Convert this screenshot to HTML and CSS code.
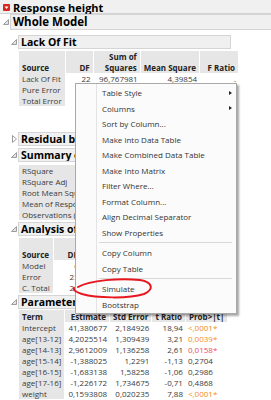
FILE: index.html
```html
<!DOCTYPE html>
<html lang="en">
  <head>
    <meta charset="UTF-8" />
    <title>Response height</title>
    <link rel="stylesheet" href="styles.css">
  </head>
  <body>
    <div class="report">
      <div class="title-bar">
        <span class="hotspot"><svg width="7" height="7" viewBox="0 0 7 7"><path d="M1.5 2.5 L5.5 2.5 L3.5 5 Z" fill="#fff"/></svg></span>
        <span>Response height</span>
      </div>

      <div class="node">
        <div class="node-head top">
          <svg class="toggle" width="8" height="8" viewBox="0 0 8 8"><path d="M6.5 1.5 L6.5 6.5 L1.5 6.5 Z" fill="#e2e2e2" stroke="#9c9c9c"/></svg>
          <div class="node-title wide">Whole Model</div>
        </div>
        <div class="node-body">
          <div class="strip"></div>

          <div class="node">
            <div class="node-head">
              <svg class="toggle" width="8" height="8" viewBox="0 0 8 8"><path d="M6.5 1.5 L6.5 6.5 L1.5 6.5 Z" fill="#e2e2e2" stroke="#9c9c9c"/></svg>
              <div class="node-title">Lack Of Fit</div>
            </div>
            <table class="grid lof">
              <thead>
                <tr><th class="txt">Source</th><th>DF</th><th>Sum of<br>Squares</th><th>Mean Square</th><th>F Ratio</th></tr>
              </thead>
              <tbody>
                <tr><td class="lbl">Lack Of Fit</td><td>22</td><td>96,767981</td><td>4,39854</td><td>.</td></tr>
                <tr><td class="lbl">Pure Error</td><td></td><td></td><td></td><td></td></tr>
                <tr><td class="lbl">Total Error</td><td></td><td></td><td></td><td></td></tr>
              </tbody>
            </table>
          </div>

          <div class="node gap-big">
            <div class="node-head">
              <svg class="toggle" width="8" height="10" viewBox="0 0 8 10"><path d="M2.5 1.5 L6.5 5 L2.5 8.5 Z" fill="#fff" stroke="#9c9c9c"/></svg>
              <div class="node-title">Residual by Predicted Plot</div>
            </div>
          </div>

          <div class="node">
            <div class="node-head">
              <svg class="toggle" width="8" height="8" viewBox="0 0 8 8"><path d="M6.5 1.5 L6.5 6.5 L1.5 6.5 Z" fill="#e2e2e2" stroke="#9c9c9c"/></svg>
              <div class="node-title">Summary of Fit</div>
            </div>
            <table class="grid fit">
              <tbody>
                <tr><td class="lbl">RSquare</td><td></td></tr>
                <tr><td class="lbl">RSquare Adj</td><td></td></tr>
                <tr><td class="lbl">Root Mean Square Error</td><td></td></tr>
                <tr><td class="lbl">Mean of Response</td><td></td></tr>
                <tr><td class="lbl">Observations (or Sum Wgts)</td><td></td></tr>
              </tbody>
            </table>
          </div>

          <div class="node">
            <div class="node-head">
              <svg class="toggle" width="8" height="8" viewBox="0 0 8 8"><path d="M6.5 1.5 L6.5 6.5 L1.5 6.5 Z" fill="#e2e2e2" stroke="#9c9c9c"/></svg>
              <div class="node-title">Analysis of Variance</div>
            </div>
            <table class="grid anova">
              <thead>
                <tr><th class="txt">Source</th><th>DF</th><th>Sum of<br>Squares</th><th>Mean Square</th><th>F Ratio</th></tr>
              </thead>
              <tbody>
                <tr><td class="lbl">Model</td><td>6</td><td></td><td></td><td></td></tr>
                <tr><td class="lbl">Error</td><td>23</td><td></td><td></td><td></td></tr>
                <tr><td class="lbl">C. Total</td><td>29</td><td></td><td></td><td></td></tr>
              </tbody>
            </table>
          </div>

          <div class="node">
            <div class="node-head">
              <svg class="toggle" width="8" height="8" viewBox="0 0 8 8"><path d="M6.5 1.5 L6.5 6.5 L1.5 6.5 Z" fill="#e2e2e2" stroke="#9c9c9c"/></svg>
              <div class="node-title">Parameter Estimates</div>
            </div>
            <table class="grid params">
              <thead>
                <tr><th class="txt">Term</th><th>Estimate</th><th>Std Error</th><th>t Ratio</th><th class="txt">Prob&gt;|t|</th></tr>
              </thead>
              <tbody>
                <tr><td class="lbl">Intercept</td><td>41,380677</td><td>2,184926</td><td>18,94</td><td class="prob p1">&lt;,0001*</td></tr>
                <tr><td class="lbl">age[13-12]</td><td>4,2025514</td><td>1,309439</td><td>3,21</td><td class="prob p1">0,0039*</td></tr>
                <tr><td class="lbl">age[14-13]</td><td>2,9612009</td><td>1,136258</td><td>2,61</td><td class="prob p5">0,0158*</td></tr>
                <tr><td class="lbl">age[15-14]</td><td>-1,388025</td><td>1,2291</td><td>-1,13</td><td class="prob">0,2704</td></tr>
                <tr><td class="lbl">age[16-15]</td><td>-1,683138</td><td>1,58258</td><td>-1,06</td><td class="prob">0,2986</td></tr>
                <tr><td class="lbl">age[17-16]</td><td>-1,226172</td><td>1,734675</td><td>-0,71</td><td class="prob">0,4868</td></tr>
                <tr><td class="lbl">weight</td><td>0,1593808</td><td>0,020235</td><td>7,88</td><td class="prob p1">&lt;,0001*</td></tr>
              </tbody>
            </table>
          </div>
        </div>
      </div>
    </div>

    <!-- context menu opened on the Lack Of Fit table -->
    <div class="popup">
      <ul class="menu">
        <li class="sub">Table Style</li>
        <li class="sub">Columns</li>
        <li>Sort by Column...</li>
        <li>Make into Data Table</li>
        <li>Make Combined Data Table</li>
        <li>Make Into Matrix</li>
        <li>Filter Where...</li>
        <li>Format Column...</li>
        <li>Align Decimal Separator</li>
        <li>Show Properties</li>
        <li class="sep"></li>
        <li>Copy Column</li>
        <li>Copy Table</li>
        <li class="sep"></li>
        <li>Simulate</li>
        <li>Bootstrap</li>
      </ul>
    </div>

    <svg class="circle" width="90" height="30" viewBox="0 0 90 30">
      <path d="M8 12 C 20 5, 50 3, 70 5 C 82 7, 85 14, 74 19 C 58 24, 26 23, 12 19 C 6 17, 3 15, 4 13" fill="none" stroke="#e8161e" stroke-width="2" stroke-linecap="round"/>
    </svg>
  </body>
</html>
```

FILE: styles.css
```css
* {
  margin: 0;
  padding: 0;
  box-sizing: border-box;
}

body {
  width: 271px;
  height: 400px;
  overflow: hidden;
  position: relative;
  background: #fff;
  font-family: "Open Sans", sans-serif;
  font-size: 8px;
  color: #3b3b3b;
}

.title-bar {
  height: 14px;
  line-height: 13px;
  display: flex;
  align-items: center;
  gap: 3px;
  padding: 1px 0 0 3px;
  background: #f0f0f0;
  border-bottom: 1px solid #d3d3d3;
  font-size: 11px;
  font-weight: 700;
  color: #000;
}

.hotspot {
  width: 7px;
  height: 7px;
  background: #d8261f;
  border-radius: 1px;
  display: flex;
}

.node-head {
  display: flex;
  align-items: center;
  height: 14px;
}

.node-head.top {
  height: 16px;
}

.toggle {
  width: 10px;
  padding-left: 2px;
  flex: none;
}

.node-title {
  width: 213px;
  height: 100%;
  line-height: 12px;
  display: flex;
  align-items: center;
  padding-left: 2px;
  background: #f0f0f0;
  border: 1px solid #d5d5d5;
  font-size: 10.5px;
  font-weight: 700;
  color: #000;
  white-space: nowrap;
  overflow: hidden;
}

.node-title.wide {
  width: 261px;
  border-right: none;
  font-size: 11.5px;
}

.node-body {
  padding-left: 8px;
}

.strip {
  height: 5px;
}

.node + .node {
  margin-top: 2px;
}

.node.gap-big {
  margin-top: 26px;
}

.grid {
  margin: 2px 0 0 11px;
  border-collapse: separate;
  border-spacing: 0;
  table-layout: fixed;
  line-height: 11px;
}

.grid th {
  background: #e6e6e6;
  border-right: 1px solid #fff;
  text-align: right;
  vertical-align: bottom;
  padding: 0 3px;
  font-weight: 700;
  color: #222;
  white-space: nowrap;
}

.grid td {
  text-align: right;
  padding: 0 3px;
  white-space: nowrap;
  overflow: hidden;
}

.grid th.txt,
.grid td.lbl {
  text-align: left;
}

.grid td.lbl {
  background: #e6e6e6;
  border-right: 1px solid #fff;
}

.lof th:nth-child(1) { width: 41px; }
.lof th:nth-child(2) { width: 28px; }
.lof th:nth-child(3) { width: 47px; }
.lof th:nth-child(4) { width: 57px; }
.lof th:nth-child(5) { width: 39px; }

.fit {
  margin-top: 3px;
}

.fit td:nth-child(1) { width: 100px; }
.fit td:nth-child(2) { width: 60px; }

.anova th:nth-child(1) { width: 33px; }
.anova th:nth-child(2) { width: 28px; }
.anova th:nth-child(3) { width: 50px; }
.anova th:nth-child(4) { width: 57px; }
.anova th:nth-child(5) { width: 40px; }

.params {
  margin-top: 1px;
}

.params th {
  height: 12px;
}

.params th:nth-child(1) { width: 41px; }
.params th:nth-child(2) { width: 44px; }
.params th:nth-child(3) { width: 42px; }
.params th:nth-child(4) { width: 31px; }
.params th:nth-child(5) { width: 36px; }

.grid td.prob {
  text-align: left;
  padding-left: 2px;
}

.p1 {
  color: #f28a25;
}

.p5 {
  color: #ee4b69;
}

/* popup menu */
.popup {
  position: absolute;
  left: 75px;
  top: 83px;
  width: 162px;
  padding: 1px;
  background: linear-gradient(to right, transparent 20px, #e3e3e3 20px, #e3e3e3 21px, transparent 21px), #fbfbfb;
  border: 1px solid #a9a9a9;
  box-shadow: 2px 2px 2px rgba(0, 0, 0, 0.35);
  font-size: 8px;
  color: #333;
}

.menu li {
  list-style: none;
  height: 15.5px;
  line-height: 15.5px;
  padding-left: 25px;
  position: relative;
  white-space: nowrap;
}

.menu li.sub::after {
  content: "";
  position: absolute;
  right: 3px;
  top: 5.5px;
  border-left: 3px solid #222;
  border-top: 2.5px solid transparent;
  border-bottom: 2.5px solid transparent;
}

.menu li.sep {
  height: 5px;
}

.menu li.sep::before {
  content: "";
  position: absolute;
  left: 22px;
  right: 3px;
  top: 2px;
  border-top: 1px solid #d9d9d9;
}

.circle {
  position: absolute;
  left: 70px;
  top: 275px;
}
```
